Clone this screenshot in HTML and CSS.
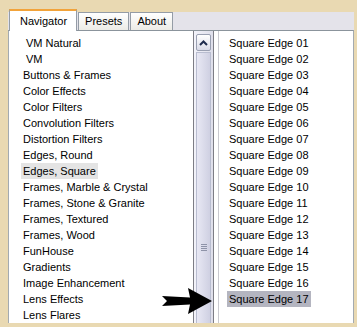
FILE: index.html
```
<html>
<head>
<title>Navigator</title>
<meta http-equiv="Content-Type" content="text/html; charset=utf-8" />
<link rel="stylesheet" href="styles.css">
</head>
<body>

<div class="window">
	<div class="tabs">
		<div class="tab active">Navigator</div>
		<div class="tab">Presets</div>
		<div class="tab">About</div>
	</div>

	<div class="content">
		<ul class="list cats">
			<li class="indent">VM Natural</li>
			<li class="indent">VM</li>
			<li>Buttons &amp; Frames</li>
			<li>Color Effects</li>
			<li>Color Filters</li>
			<li>Convolution Filters</li>
			<li>Distortion Filters</li>
			<li>Edges, Round</li>
			<li class="current">Edges, Square</li>
			<li>Frames, Marble &amp; Crystal</li>
			<li>Frames, Stone &amp; Granite</li>
			<li>Frames, Textured</li>
			<li>Frames, Wood</li>
			<li>FunHouse</li>
			<li>Gradients</li>
			<li>Image Enhancement</li>
			<li>Lens Effects</li>
			<li>Lens Flares</li>
		</ul>

		<div class="scrollbar">
			<div class="btn-up">
				<svg width="9" height="6" viewBox="0 0 9 6"><path d="M1 5 L4.5 1.5 L8 5" fill="none" stroke="#1e2b4d" stroke-width="2"/></svg>
			</div>
			<div class="thumb"><div class="grip"></div></div>
		</div>

		<div class="sep"></div>

		<ul class="list presets">
			<li>Square Edge 01</li>
			<li>Square Edge 02</li>
			<li>Square Edge 03</li>
			<li>Square Edge 04</li>
			<li>Square Edge 05</li>
			<li>Square Edge 06</li>
			<li>Square Edge 07</li>
			<li>Square Edge 08</li>
			<li>Square Edge 09</li>
			<li>Square Edge 10</li>
			<li>Square Edge 11</li>
			<li>Square Edge 12</li>
			<li>Square Edge 13</li>
			<li>Square Edge 14</li>
			<li>Square Edge 15</li>
			<li>Square Edge 16</li>
			<li class="selected">Square Edge 17</li>
		</ul>

		<svg class="arrow" width="52" height="28" viewBox="0 0 52 28">
			<polygon points="0,9 28,10.5 26,1 50,14 26,27 28,17.5 0,19 5,14" fill="#000"/>
		</svg>
	</div>
</div>

</body>
</html>
```

FILE: styles.css
```
body {
margin: 0;
background-color: #e9d9b2;
font-family: "Liberation Sans", Arial, sans-serif;
font-size: 11px;
color: #000;
}

.window {
margin: 12px 3px 0 8px;
background-color: #e4e3ea;
}

.tabs {
display: flex;
height: 18px;
padding-left: 1px;
}

.tab {
height: 17px;
line-height: 17px;
padding: 0 6px;
margin-right: 1px;
border: 1px solid #949ca6;
border-bottom: none;
background: linear-gradient(#ffffff, #ecebe6);
}

.tab.active {
height: 20px;
margin-top: -3px;
padding: 0 9px 0 10px;
line-height: 21px;
background: #fff;
border-top: 2px solid #f2a33a;
position: relative;
z-index: 1;
}

.content {
position: relative;
display: flex;
height: 292px;
overflow: hidden;
background-color: #fff;
border-top: 1px solid #8b949c;
border-left: 1px solid #a3aab0;
border-right: 1px solid #a3aab0;
}

.list {
list-style: none;
margin: 0;
padding: 4px 0 0 0;
}

.list li {
height: 16px;
line-height: 16px;
white-space: nowrap;
}

.cats {
width: 184px;
padding-left: 12px;
box-sizing: border-box;
}

.cats li {
display: table;
padding: 0 2px;
}

.cats li.indent {
padding-left: 5px;
}

.cats li.current {
background-color: #e4e4e4;
}

.scrollbar {
width: 19px;
border-left: 1px solid #7d7d85;
border-right: 1px solid #7d7d85;
background: linear-gradient(90deg, #f3f3fa, #dedeea);
display: flex;
flex-direction: column;
}

.btn-up {
height: 15px;
margin: 3px 2px 1px 2px;
border: 1px solid #9aa0b2;
border-radius: 2px;
background: linear-gradient(#ffffff, #dadbe8);
display: flex;
align-items: center;
justify-content: center;
}

.thumb {
flex: 1;
margin: 0 2px;
border: 1px solid #b9bdd0;
border-bottom: none;
background: linear-gradient(90deg, #e8e8f4, #cfd0e2);
}

.grip {
width: 6px;
height: 7px;
margin: 191px auto 0 auto;
background: repeating-linear-gradient(#8e93a8 0 1px, transparent 1px 2px);
}

.sep {
width: 4px;
border-right: 1px solid #c9c9cf;
}

.presets {
padding-left: 8px;
}

.presets li {
display: table;
padding: 0 2px;
}

.presets li.selected {
background-color: #b4b5c0;
}

.arrow {
position: absolute;
left: 153px;
top: 256px;
}
```
